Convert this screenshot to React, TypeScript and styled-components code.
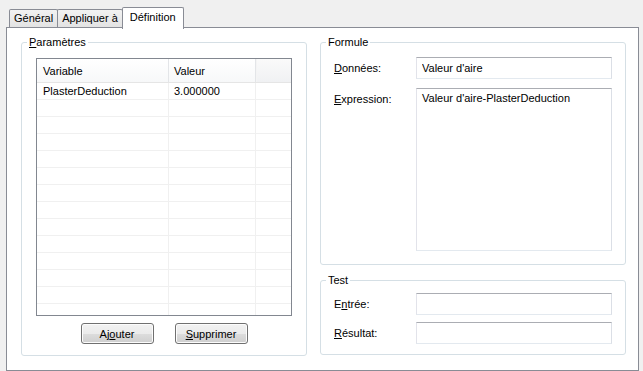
import React from 'react';
import styled, { createGlobalStyle } from 'styled-components';

const Global = createGlobalStyle`
  html, body { margin: 0; padding: 0; background: #f0f0f0; }
  body { font-family: "Liberation Sans", Arial, sans-serif; font-size: 11px; color: #000; }
  *, *::before, *::after { box-sizing: border-box; }
`;

const Window = styled.div`
  width: 643px;
  height: 371px;
  padding: 7px 4px 0 6px;
  display: flex;
  flex-direction: column;
  overflow: hidden;
`;

const TabStrip = styled.div`
  display: flex;
  align-items: flex-end;
  height: 20px;
  padding-left: 3px;
  position: relative;
  z-index: 1;
`;

const Tab = styled.div<{ $active?: boolean }>`
  height: ${p => (p.$active ? 22 : 18)}px;
  margin-bottom: ${p => (p.$active ? -2 : 0)}px;
  padding: 0 ${p => (p.$active ? 7 : 4)}px ${p => (p.$active ? 3 : 0)}px;
  border: 1px solid #898c95;
  border-bottom: none;
  border-radius: 2px 2px 0 0;
  background: ${p => (p.$active ? '#ffffff' : 'linear-gradient(#f2f2f2, #e3e3e3)')};
  display: flex;
  align-items: center;
  line-height: 13px;
  white-space: nowrap;
  & + & { margin-left: -1px; }
`;

const Panel = styled.div`
  flex: 1;
  background: #fff;
  border: 1px solid #898c95;
  display: grid;
  grid-template-columns: 286px 306px;
  column-gap: 13px;
  padding: 8px 12px 14px 14px;
`;

const GroupBox = styled.fieldset`
  margin: 0;
  padding: 0;
  min-width: 0;
  border: 1px solid #d5dfe5;
  border-radius: 3px;
`;

const Legend = styled.legend`
  margin-left: 5px;
  padding: 0 2px;
  line-height: 13px;
  font-size: 11px;
`;

const Key = styled.u`
  text-decoration: underline;
  text-decoration-thickness: 1px;
  text-underline-offset: 1px;
`;

const ParamsBody = styled.div`
  padding: 9px 14px 11px 14px;
  display: flex;
  flex-direction: column;
  gap: 7px;
`;

const List = styled.div`
  height: 258px;
  border: 1px solid #828790;
  background: #fff;
  overflow: hidden;
`;

const HeaderRow = styled.div`
  display: flex;
  height: 24px;
  border-bottom: 1px solid #e5e5e5;
  background: linear-gradient(#ffffff, #f7f8f9);
`;

const HeaderCell = styled.div<{ $w?: number; $pad?: number; $filler?: boolean }>`
  ${p => (p.$w ? `width: ${p.$w}px;` : 'flex: 1;')}
  padding-left: ${p => p.$pad ?? 5}px;
  display: flex;
  align-items: center;
  border-right: ${p => (p.$filler ? 'none' : '1px solid #e3e5e8')};
  background: ${p => (p.$filler ? 'linear-gradient(#fafafa, #f0f1f3)' : 'transparent')};
  box-shadow: ${p => (p.$filler ? 'inset 1px 0 0 #f4f4f4' : 'none')};
`;

const Row = styled.div`
  display: flex;
  height: 17px;
  border-bottom: 1px solid #f0f0f0;
`;

const Cell = styled.div<{ $w?: number; $pad?: number; $last?: boolean }>`
  ${p => (p.$w ? `width: ${p.$w}px;` : 'flex: 1;')}
  padding-left: ${p => p.$pad ?? 5}px;
  display: flex;
  align-items: center;
  white-space: nowrap;
  border-right: ${p => (p.$last ? 'none' : '1px solid #f0f0f0')};
`;

const ButtonRow = styled.div`
  display: flex;
  justify-content: center;
  gap: 21px;
`;

const Button = styled.button`
  width: 73px;
  height: 21px;
  padding: 0;
  font: inherit;
  color: #000;
  border: 1px solid #707070;
  border-radius: 3px;
  background: linear-gradient(#f2f2f2 0%, #ebebeb 50%, #dddddd 51%, #cfcfcf 100%);
  box-shadow: inset 0 0 0 1px #fcfcfc;
`;

const RightColumn = styled.div`
  display: flex;
  flex-direction: column;
  gap: 9px;
`;

const FormBody = styled.div<{ $top: number; $bottom: number; $gap: number }>`
  display: grid;
  grid-template-columns: 82px 1fr;
  row-gap: ${p => p.$gap}px;
  align-items: start;
  padding: ${p => p.$top}px 13px ${p => p.$bottom}px 13px;
`;

const Label = styled.label`
  line-height: 22px;
  white-space: nowrap;
`;

const TextBox = styled.input`
  width: 100%;
  height: 22px;
  margin: 0;
  padding: 0 5px;
  font: inherit;
  color: #000;
  background: #fff;
  border: 1px solid;
  border-color: #abadb3 #dbdfe6 #e3e9ef #e2e3ea;
  outline: none;
`;

const TextArea = styled.textarea`
  display: block;
  width: 100%;
  height: 163px;
  margin: 0;
  padding: 3px 5px;
  font: inherit;
  color: #000;
  background: #fff;
  resize: none;
  border: 1px solid;
  border-color: #abadb3 #dbdfe6 #e3e9ef #e2e3ea;
  outline: none;
`;

const rows = [{ name: 'PlasterDeduction', value: '3.000000' }];
const emptyRows = 13;

export default function App() {
  return (
    <>
      <Global />
      <Window>
        <TabStrip>
          <Tab>Général</Tab>
          <Tab>Appliquer à</Tab>
          <Tab $active>Définition</Tab>
        </TabStrip>
        <Panel>
          <GroupBox>
            <Legend>
              <Key>P</Key>aramètres
            </Legend>
            <ParamsBody>
              <List>
                <HeaderRow>
                  <HeaderCell $w={132} $pad={6}>Variable</HeaderCell>
                  <HeaderCell $w={87}>Valeur</HeaderCell>
                  <HeaderCell $filler />
                </HeaderRow>
                {rows.map(r => (
                  <Row key={r.name}>
                    <Cell $w={132} $pad={6}>{r.name}</Cell>
                    <Cell $w={87}>{r.value}</Cell>
                    <Cell $last />
                  </Row>
                ))}
                {Array.from({ length: emptyRows }).map((_, i) => (
                  <Row key={i}>
                    <Cell $w={132} />
                    <Cell $w={87} />
                    <Cell $last />
                  </Row>
                ))}
              </List>
              <ButtonRow>
                <Button>
                  Aj<Key>o</Key>uter
                </Button>
                <Button>
                  <Key>S</Key>upprimer
                </Button>
              </ButtonRow>
            </ParamsBody>
          </GroupBox>
          <RightColumn>
            <GroupBox>
              <Legend>Formule</Legend>
              <FormBody $top={8} $bottom={13} $gap={9}>
                <Label>
                  <Key>D</Key>onnées:
                </Label>
                <TextBox readOnly defaultValue="Valeur d'aire" />
                <Label>
                  <Key>E</Key>xpression:
                </Label>
                <TextArea readOnly defaultValue="Valeur d'aire-PlasterDeduction" />
              </FormBody>
            </GroupBox>
            <GroupBox>
              <Legend>Test</Legend>
              <FormBody $top={6} $bottom={10} $gap={7}>
                <Label>
                  E<Key>n</Key>trée:
                </Label>
                <TextBox readOnly defaultValue="" />
                <Label>
                  <Key>R</Key>ésultat:
                </Label>
                <TextBox readOnly defaultValue="" />
              </FormBody>
            </GroupBox>
          </RightColumn>
        </Panel>
      </Window>
    </>
  );
}
